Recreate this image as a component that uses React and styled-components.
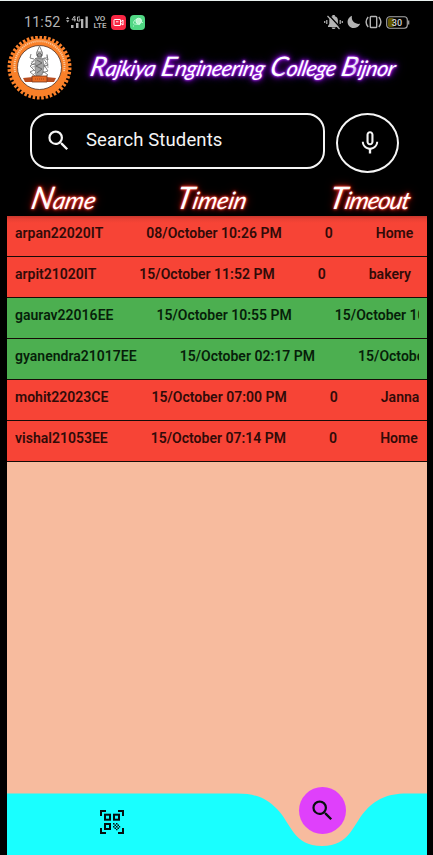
import React from "react";
import styled, { createGlobalStyle } from "styled-components";
import { MdSearch, MdMicNone } from "react-icons/md";

const GlobalStyle = createGlobalStyle`
  * { box-sizing: border-box; }
  html, body { margin: 0; background: #000; }
  body { font-family: Roboto, sans-serif; overflow: hidden; }
`;

const Screen = styled.div`
  width: 433px;
  height: 855px;
  padding: 0 6px 0 7px;
  border-top: 1px solid #e9f1ef;
  background: #000;
  display: flex;
  flex-direction: column;
  overflow: hidden;
`;

const StatusBar = styled.div`
  height: 34px;
  flex: none;
  padding: 8px 17px 0 17px;
  display: flex;
  justify-content: space-between;
  align-items: center;
  color: #b4b4b4;
`;

const StatusGroup = styled.div`
  display: flex;
  align-items: center;
  gap: ${(p) => p.$gap}px;
`;

const Clock = styled.span`
  font-size: 14.3px;
  line-height: 16px;
  letter-spacing: 0.15px;
  width: 37px;
  white-space: nowrap;
`;

const Volte = styled.span`
  display: flex;
  flex-direction: column;
  align-items: center;
  font-size: 8px;
  font-weight: 600;
  width: 14px;
  span { line-height: 7px; height: 7px; }
`;

const AppBadge = styled.span`
  width: 15px;
  height: 15px;
  border-radius: 4px;
  background: ${(p) => p.$color};
  display: flex;
  align-items: center;
  justify-content: center;
`;

const Header = styled.header`
  height: 66px;
  flex: none;
  display: flex;
  align-items: center;
`;

const Title = styled.h1`
  margin: 0 0 2px 19px;
  display: flex;
  gap: 6px;
  font-weight: 400;
`;

const NeonWord = styled.span`
  display: block;
  font-family: "Lato", sans-serif;
  font-style: italic;
  font-weight: 400;
  font-size: ${(p) => p.$size}px;
  line-height: 34px;
  letter-spacing: ${(p) => p.$track}px;
  white-space: nowrap;
  color: #fff;
  transform: skewX(-12deg);
  text-shadow: ${(p) =>
    p.$glow === "violet"
      ? "0 0 2px #c45cff, 0 0 3px #9c16ed, 0 0 5px #8500d6, 0 0 7px #7a00c8, 0 0 10px #6500a8"
      : "0 0 2px #ff5a4e, 0 0 3px #e0281e, 0 0 5px #c41f17, 0 0 9px #8f120c"};
  &::first-letter { font-size: ${(p) => p.$cap}px; }
`;

const SearchRow = styled.div`
  height: 79px;
  flex: none;
  padding: 12px 27px 0 23px;
  display: flex;
  gap: 11px;
`;

const SearchField = styled.div`
  width: 295px;
  height: 56px;
  border: 2px solid #f5f5f5;
  border-radius: 18px;
  display: flex;
  align-items: center;
  padding: 0 0 2px 13px;
  gap: 14px;
  color: #f5f5f5;
  font-size: 18.5px;
  letter-spacing: 0.12px;
`;

const MicButton = styled.button`
  width: 63px;
  height: 60px;
  padding: 0 0 0 4px;
  border: 2px solid #f5f5f5;
  border-radius: 50%;
  background: transparent;
  color: #f5f5f5;
  display: flex;
  align-items: center;
  justify-content: center;
`;

const TableHead = styled.div`
  height: 36px;
  flex: none;
  padding: 0 16px 8px 25px;
  display: grid;
  grid-template-columns: 145px 153px 79px;
  align-items: center;
`;

const Records = styled.main`
  flex: 1;
  background: #f7bb9e;
`;

const Record = styled.div`
  height: 41px;
  padding: 0 8px;
  border-bottom: 1px solid #160b07;
  background: ${(p) => (p.$returned ? "#4caf50" : "#f74436")};
  color: ${(p) => (p.$returned ? "#071f0a" : "#310b08")};
  &:first-child {
    background: linear-gradient(#c9382d 0, #e94034 3px, #f74436 7px);
  }
`;

const RecordLine = styled.div`
  display: flex;
  gap: 43px;
  overflow: hidden;
  white-space: nowrap;
  font-size: 14px;
  font-weight: 650;
  line-height: 20px;
  padding-top: 7px;
  letter-spacing: 0.01px;
`;

const Cell = styled.span`
  flex: none;
`;

const NavBar = styled.nav`
  position: relative;
  height: 62px;
  flex: none;
  background: #f7bb9e;
`;

const Wave = styled.svg`
  position: absolute;
  inset: 0;
  display: block;
`;

const NavButton = styled.button`
  position: absolute;
  left: ${(p) => p.$x}px;
  top: ${(p) => p.$y}px;
  width: ${(p) => p.$size}px;
  height: ${(p) => p.$size}px;
  padding: 0;
  border: 0;
  border-radius: 50%;
  background: ${(p) => p.$fill};
  color: #08100f;
  display: flex;
  align-items: center;
  justify-content: center;
`;

const records = [
  ["arpan22020IT", "08/October 10:26 PM", "0", "Home"],
  ["arpit21020IT", "15/October 11:52 PM", "0", "bakery"],
  ["gaurav22016EE", "15/October 10:55 PM", "15/October 10:56 PM"],
  ["gyanendra21017EE", "15/October 02:17 PM", "15/October 02:18 PM"],
  ["mohit22023CE", "15/October 07:00 PM", "0", "Janna"],
  ["vishal21053EE", "15/October 07:14 PM", "0", "Home"],
];

function Signal() {
  return (
    <svg width="24" height="14" viewBox="0 0 24 14" fill="#b4b4b4">
      <path d="M1 4 2.7 1.8 4.4 4ZM1 5.2h3.4L2.7 7.4Z" />
      <path d="M9.5 1 7 4.8h4M9.8 1v5.5M15 2h-2.5v4H15V4h-1.2" fill="none" stroke="#b4b4b4" strokeWidth="1" />
      <path d="M6 10h2.5v3H6ZM11 8h2.5v5H11ZM16 4h2.3v9H16ZM20.5 1.5h2.3V13h-2.3Z" />
    </svg>
  );
}

function MutedBell() {
  return (
    <svg width="19" height="16" viewBox="0 0 19 16">
      <path d="M4 12 5.3 10V6.3C5.3 4 6.7 2.6 8.4 2.2V1h2.4v1.2c1.8.5 3.1 1.8 3.1 4V10l1.5 2v1H4ZM7.6 13.4h4c-.4 2-3.6 2-4 0Z" fill="#b4b4b4" />
      <path d="M4.5 .8 16.5 13.8" stroke="#000" strokeWidth="1.4" />
      <path d="M3.5 2 15.5 15M2.8 6v4M.7 7v2M16.2 6v4M18.3 7v2" stroke="#b4b4b4" strokeWidth="1.2" />
    </svg>
  );
}

function Moon() {
  return (
    <svg width="14" height="14" viewBox="0 0 14 14">
      <path d="M5 .8C3.9 5.6 7.4 9.5 13.2 8.8 10.7 14.4 3.7 14.4 1.2 9.7-.5 6 1.3 2.2 5 .8Z" fill="#b4b4b4" />
    </svg>
  );
}

function Vibrate() {
  return (
    <svg width="17" height="14" viewBox="0 0 17 14" fill="none" stroke="#b4b4b4" strokeWidth="1.4">
      <rect x="5.3" y="1.5" width="6.4" height="11" rx=".8" />
      <path d="M3.2 2Q-1 7 3.2 12M13.8 2Q18 7 13.8 12" />
    </svg>
  );
}

function Battery() {
  return (
    <svg width="24" height="13" viewBox="0 0 24 13">
      <rect x="2" y="2" width="6" height="9" rx="1.5" fill="#625600" />
      <rect x=".7" y=".7" width="20.6" height="11.6" rx="3" fill="none" stroke="#aaa" strokeWidth="1.1" />
      <path d="M22.7 4.5v4" stroke="#aaa" strokeWidth="1.2" />
      <text x="11" y="9.7" textAnchor="middle" fontFamily="Roboto, sans-serif" fontWeight="600" fontSize="9" fill="#ccc">30</text>
    </svg>
  );
}

function QrScan() {
  return (
    <svg width="24" height="24" viewBox="0 0 24 24" fill="none" stroke="#06100f" strokeWidth="2">
      <path d="M1 6V1h5M18 1h5v5M23 18v5h-5M6 23H1v-5" />
      <rect x="5" y="4.7" width="5" height="5" />
      <rect x="14" y="4.7" width="5" height="5" />
      <rect x="5" y="14" width="5" height="5" />
      <path
        d="M13 13h1.5v1.5H13ZM16 13h1.5v1.5H16ZM14.5 14.5H16V16h-1.5ZM17.5 14.5H19V16h-1.5ZM13 16h1.5v1.5H13ZM16 16h1.5v1.5H16ZM14.5 17.5H16V19h-1.5ZM17.5 17.5H19V19h-1.5ZM16 19h1.5v1.2H16ZM19 16h1.2v1.5H19Z"
        fill="#06100f"
        stroke="none"
      />
    </svg>
  );
}

function CollegeCrest() {
  return (
    <svg width="65" height="65" viewBox="0 0 65 65">
      <circle cx="32.5" cy="31.5" r="30" fill="none" stroke="#fb812a" strokeWidth="4" strokeDasharray="1.2 .8" pathLength="88" />
      <circle cx="32.5" cy="31.5" r="29" fill="#f98029" />
      <path d="M8.2 36A25 25 0 1 1 56.8 36" fill="none" stroke="#f7cfaa" strokeWidth="2" strokeDasharray="1.2 .8" opacity=".85" />
      <circle cx="32.5" cy="31.5" r="22" fill="#fff" stroke="#50352a" strokeWidth=".8" />
      <g fill="none" stroke="#777" strokeWidth=".9">
        <path d="m29.5 17 3-7 3 7-1.5 5h-3ZM30 16h5M29 19h7M27 23l-4-1 1-4M37 22l4 2-1-5M29 22l-5 6 5 1M36 22l5 7-5 2M28 27l-5 3 5 5M37 29l4 6-6 2M27 34l-4 2 5 4M36 35l5 4-5 3" />
        <path d="m24 26 17-5M25 31l16-2M40 18l1 14M26 39l13-12M28 41l8-9" strokeWidth=".6" />
      </g>
      <path d="m29 22 7 1 1 8-2 8-6 1-1-8Z" fill="#a5a5a5" stroke="#666" strokeWidth=".6" />
      <circle cx="32.5" cy="19" r="2.1" fill="#999" stroke="#444" strokeWidth=".7" />
      <path d="m30 24 5 3-6 3 6 3-5 4" fill="none" stroke="#555" strokeWidth=".8" />
      <path d="m16 42 10-1v5H18ZM49 42l-10-1v5h8Z" fill="#b94d20" />
      <path d="M25 40h15v6H25Z" fill="#e96b22" stroke="#763b20" strokeWidth=".8" />
      <path d="M28 43h9" stroke="#a24c20" strokeDasharray="1 1" />
    </svg>
  );
}

const titleWords = ["Rajkiya", "Engineering", "College", "Bijnor"];
const columns = ["Name", "Timein", "Timeout"];

export default function App() {
  return (
    <>
      <GlobalStyle />
      <Screen>
        <StatusBar>
          <StatusGroup $gap={4}>
            <Clock>11:52</Clock>
            <Signal />
            <Volte><span>VO</span><span>LTE</span></Volte>
            <AppBadge $color="#f92744">
              <svg width="11" height="9" viewBox="0 0 11 9" fill="none" stroke="#fff">
                <rect x="1" y="1.5" width="6.5" height="6" rx=".5" />
                <path d="m7.5 4 2.5-2v5L7.5 5.2M3 3.8h2.5" />
              </svg>
            </AppBadge>
            <AppBadge $color="#50d783">
              <svg width="12" height="12" viewBox="0 0 12 12" fill="none" stroke="#d4ffe5">
                <circle cx="6.7" cy="5" r="2.8" fill="#c1f5d2" />
                <path d="M3.6 3.5Q0 7 2.5 8L8 8.6M10.4 6v1M1 10h1" strokeWidth=".8" />
              </svg>
            </AppBadge>
          </StatusGroup>
          <StatusGroup $gap={4}>
            <MutedBell /><Moon /><Vibrate /><Battery />
          </StatusGroup>
        </StatusBar>
        <Header>
          <CollegeCrest />
          <Title>
            {titleWords.map((word) => (
              <NeonWord key={word} $glow="violet" $size={21.5} $cap={27} $track={-0.4}>{word}</NeonWord>
            ))}
          </Title>
        </Header>
        <SearchRow>
          <SearchField><MdSearch size={27} /><span>Search Students</span></SearchField>
          <MicButton aria-label="Voice search"><MdMicNone size={28} /></MicButton>
        </SearchRow>
        <TableHead>
          {columns.map((label) => (
            <NeonWord key={label} $glow="red" $size={24} $cap={31} $track={label === "Timeout" ? -0.9 : -0.1}>{label}</NeonWord>
          ))}
        </TableHead>
        <Records>
          {records.map((cells) => (
            <Record key={cells[0]} $returned={cells[2] !== "0"}>
              <RecordLine>{cells.map((cell, i) => <Cell key={i}>{cell}</Cell>)}</RecordLine>
            </Record>
          ))}
        </Records>
        <NavBar>
          <Wave width="420" height="62" viewBox="0 0 420 62">
            <path d="M0 .5H230C251 .5 261 7 270 16C284 30 286 53 315 53C344 53 346 30 360 16C369 7 379 .5 400 .5H420V62H0Z" fill="#19ffff" />
          </Wave>
          <NavButton $x={91} $y={15} $size={28} $fill="transparent" aria-label="Scan code"><QrScan /></NavButton>
          <NavButton $x={291.5} $y={-6} $size={47} $fill="#df40fb" aria-label="Search"><MdSearch size={27} /></NavButton>
        </NavBar>
      </Screen>
    </>
  );
}
